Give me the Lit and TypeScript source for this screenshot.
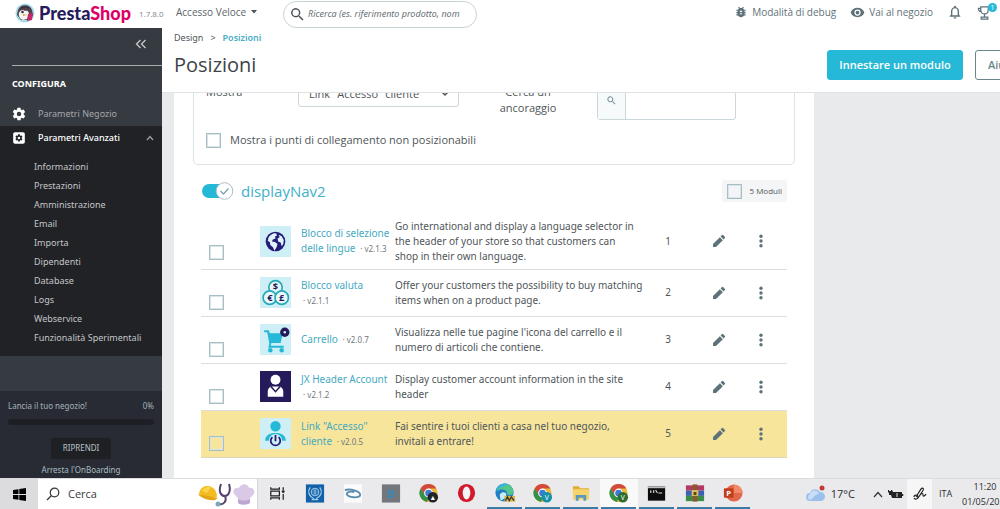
import { LitElement, html, svg, css } from "lit";
import { customElement } from "lit/decorators.js";

interface ModuleRow {
  icon: unknown;
  name: string;
  version: string;
  stacked?: boolean;
  text: string;
  active?: boolean;
}

const globe = svg`<rect width="30" height="30" fill="#cdeff5"/><circle cx="15" cy="15" r="9.500" fill="#251b7a"/>
<path fill="#dff5f9" d="M8 12c1-3 4-5 7.500-5l1 2-2 1.500.500 1.500-2.500 1-1 2 3 .5 2.500 2-1 3-2 3.500-1.500-3.500-2.500-2-.500-3-2-1zM18 8.500l3 1.500 2 3.500-.500 4-1.500 2-1-3.500-2.500-1-.500-3 2-1z"/>`;
const coin = (x: number, y: number, s: string) => svg`<circle cx="${x}" cy="${y}" r="6.500" fill="#e9f8fb" stroke="#25a9b9" stroke-width="1.600"/>
<text x="${x}" y="${y + 3}" text-anchor="middle" font-size="9" font-weight="700" fill="#251b5b">${s}</text>`;
const coins = svg`<rect width="30" height="30" fill="#cdeff5"/>${coin(15, 10, "$")}${coin(9.5, 20, "€")}${coin(21, 20, "£")}`;
const cart = svg`<rect width="30" height="30" rx="1" fill="#cdeff5"/>
<path fill="#25b9d7" d="M4 6h4.500l1 3H22l-2 9.500H11l-.5 2.500H23v2H8l1-4L7 8H4z"/><circle cx="10" cy="25.500" r="2.200" fill="#25b9d7"/><circle cx="21" cy="25.500" r="2.200" fill="#25b9d7"/>
<circle cx="24" cy="8" r="4.500" fill="#251b5b"/><circle cx="24" cy="8" r="1.200" fill="#cdeff5"/>`;
const person = svg`<rect width="30" height="30" fill="#251b5b"/><circle cx="15" cy="8.500" r="4.800" fill="#fff"/>
<path fill="#fff" d="M7.500 25v-5c0-3 2-5 4.500-5h6c2.500 0 4.500 2 4.500 5v5z"/><path d="M10.500 15l4.500 5 4.500-5" fill="none" stroke="#251b5b" stroke-width="1.500"/>`;
const login = svg`<rect width="30" height="30" fill="#cdeff5"/><circle cx="15" cy="8" r="5" fill="#25b9d7"/>
<path fill="#25b9d7" d="M5 22c0-5 4-7.500 10-7.500S25 17 25 22h-3.500a6.500 6.500 0 0 0-13 0z"/>
<path d="M12 18.500a4.600 4.600 0 1 0 6 0M15 16.500v6" fill="none" stroke="#251b7a" stroke-width="1.700"/>`;

const modules: ModuleRow[] = [
  { icon: globe, name: "Blocco di selezione\ndelle lingue", version: "v2.1.3", text: "Go international and display a language selector in\nthe header of your store so that customers can\nshop in their own language." },
  { icon: coins, name: "Blocco valuta", version: "v2.1.1", stacked: true, text: "Offer your customers the possibility to buy matching\nitems when on a product page." },
  { icon: cart, name: "Carrello", version: "v2.0.7", text: "Visualizza nelle tue pagine l'icona del carrello e il\nnumero di articoli che contiene." },
  { icon: person, name: "JX Header Account", version: "v2.1.2", stacked: true, text: "Display customer account information in the site\nheader" },
  { icon: login, name: "Link \"Accesso\"\ncliente", version: "v2.0.5", text: "Fai sentire i tuoi clienti a casa nel tuo negozio,\ninvitali a entrare!", active: true },
];

const subItems = ["Informazioni", "Prestazioni", "Amministrazione", "Email", "Importa", "Dipendenti", "Database", "Logs", "Webservice", "Funzionalità Sperimentali"];

const gearPath = "M19.400 13c0-.3.1-.6.1-1s0-.7-.1-1l2.100-1.600c.2-.2.2-.4.1-.6l-2-3.500c-.1-.2-.4-.3-.6-.2l-2.500 1c-.5-.4-1.100-.7-1.700-1L14.400 2.400c0-.2-.2-.4-.5-.4h-4c-.2 0-.5.2-.5.4L9.100 5.100c-.6.2-1.200.6-1.700 1l-2.500-1c-.2-.1-.5 0-.6.2l-2 3.500c-.1.2-.1.500.1.600L4.500 11c0 .3-.1.600-.1 1s0 .7.1 1l-2.100 1.600c-.2.200-.2.400-.1.600l2 3.500c.1.200.4.300.6.200l2.500-1c.5.400 1.100.7 1.700 1l.4 2.700c0 .2.200.4.500.4h4c.2 0 .5-.2.5-.4l.4-2.700c.6-.2 1.200-.6 1.700-1l2.500 1c.2.100.5 0 .6-.2l2-3.500c.1-.2.1-.5-.1-.6zM12 15.500a3.500 3.500 0 1 1 0-7 3.500 3.500 0 0 1 0 7z";

const searchIcon = svg`<path fill="currentColor" d="M15.500 14h-.8l-.3-.3A6.500 6.500 0 1 0 13.700 14.400l.3.3v.8l5 5 1.500-1.500zm-6 0a4.500 4.500 0 1 1 0-9 4.500 4.500 0 0 1 0 9z"/>`;

const chrome = (badge: string, letter: string) => svg`<circle cx="11" cy="11" r="9.500" fill="#e8b93a"/>
<path fill="#d34a3c" d="M2.800 6.200a9.500 9.500 0 0 1 16.400 0H11L7 13z"/><path fill="#34914c" d="M2.800 6.200L8 14.500l3 1.500-1.500 4.400A9.500 9.500 0 0 1 2.800 6.200z"/>
<circle cx="11" cy="11" r="4.600" fill="#fff"/><circle cx="11" cy="11" r="3.500" fill="#3c7bd8"/>
<circle cx="15.500" cy="15.500" r="5.500" fill="${badge}"/><text x="15.500" y="18" text-anchor="middle" font-size="7" fill="#fff">${letter}</text>`;

const apps: { label: string; art: unknown; state?: string }[] = [
  { label: "Visualizzazione attività", art: svg`<path d="M5 5v2h9V5M5 18v-2h9v2M5 9h9v5H5zM18 5v3M18 12v6" fill="none" stroke="#222" stroke-width="1.300"/><circle cx="18" cy="9.500" r="1.500" fill="#222"/>` },
  { label: "Organizzazione", art: svg`<rect x="2" y="2" width="19" height="19" fill="#1261a8"/><circle cx="11.500" cy="10" r="4" fill="none" stroke="#9fcbe8"/><path d="M7.500 10h8M11.500 6v8M9 7c1 2 4 2 5 0M9 13c1-2 4-2 5 0" fill="none" stroke="#9fcbe8" stroke-width=".7"/><path d="M6.500 5c-3 4-2 9 4 12M16.500 5c3 4 2 9-4 12M8 18h7" fill="none" stroke="#9fcbe8" stroke-width="1.300"/>` },
  { label: "Orbita", art: svg`<rect x="2" y="2" width="19" height="19" fill="#fbfbfb"/><path d="M3 8c5-2 16 1 16 5s-13 3-14-1c0-2 4-3 8-2" fill="none" stroke="#5c8db0" stroke-width="2"/>` },
  { label: "Desktop", art: svg`<rect x="2" y="2" width="19" height="19" fill="#73777b"/><path d="M9 7v8h4l2-3-4-2 3-2" fill="none" stroke="#3b87b5" stroke-width="1.800"/>` },
  { label: "Chrome", art: chrome("#20242a", "▲") },
  { label: "Opera", art: svg`<ellipse cx="11" cy="11" rx="9" ry="9.500" fill="#d1192c"/><ellipse cx="11" cy="11" rx="4" ry="6.800" fill="#f4f4f5"/>` },
  { label: "Edge", state: "open", art: svg`<circle cx="11" cy="10.500" r="9.500" fill="#1f7fc7"/><path fill="#53c58d" d="M11 1a9.500 9.500 0 0 1 9.500 9c0 3-5 4-7 2 1-5-6-6-11-3A9.500 9.500 0 0 1 11 1z"/><path fill="#34b6dc" d="M2 9a9.500 9.500 0 0 1 9-8c2 0 3 .5 4 1-5 1-9 3-13 7z"/><path fill="#c9ebf5" d="M6 14c0-4 5-5 7-2l-1 4-5 3z"/><rect x="11" y="14" width="11" height="6" fill="#d9b43f"/><path d="M12 19l2-4 2 4 2-4 3 4" fill="none" stroke="#333" stroke-width="1.300"/>` },
  { label: "Chrome V", state: "open", art: chrome("#1590a8", "V") },
  { label: "Esplora file", state: "open", art: svg`<path fill="#e2ac38" d="M3 4h6l2 2h9v4H3z"/><path fill="#f7d36b" d="M3 7h17v11H3z"/><path fill="#5a98be" d="M6 19v-6h11v6h-3v-3H9v3z"/>` },
  { label: "Chrome attivo", state: "open current", art: chrome("#2c6e2f", "V") },
  { label: "Terminale", state: "open", art: svg`<rect x="2" y="4" width="18" height="15" fill="#0c0c0c"/><rect x="2" y="4" width="18" height="2" fill="#bdbdbd"/><path d="M5 8v3M8 8v3M10 8l2 3M13 11h4" stroke="#ddd" stroke-width="1.200"/>` },
  { label: "WinRAR", state: "open", art: svg`<rect x="2" y="3" width="19" height="5.500" fill="#b33a66"/><rect x="2" y="8.500" width="19" height="5.500" fill="#3a62b0"/><rect x="2" y="14" width="19" height="5.500" fill="#3c8b48"/><rect x="9" y="2" width="5" height="18" fill="#8a5a2c"/><rect x="8" y="8" width="7" height="6" fill="#e0c060"/><rect x="10" y="10" width="3" height="3" fill="#55401f"/>` },
  { label: "PowerPoint", state: "open", art: svg`<circle cx="12.500" cy="11" r="9" fill="#e0684a"/><path fill="#f08a68" d="M12.500 2a9 9 0 0 1 9 9h-9z"/><rect x="2" y="6" width="10" height="10" rx="1" fill="#c43e1c"/><text x="7" y="14" text-anchor="middle" font-size="8" font-weight="700" fill="#fff">P</text>` },
];

@customElement("app-root")
export class AppRoot extends LitElement {
  static styles = css`
    :host { display: flex; flex-direction: column; height: 100vh; overflow: hidden; background: #fff; color: #4f5659;
      font-family: "Open Sans", "Noto Sans", sans-serif; font-size: 11px; line-height: 16px; }
    * { box-sizing: border-box; }
    a { text-decoration: none; color: inherit; }
    button { font: inherit; color: inherit; background: none; border: 0; padding: 0; }
    h1, h2, p, ul { margin: 0; padding: 0; font-weight: 400; }
    ul { list-style: none; }
    svg { display: block; flex: none; }
    input, select { font: inherit; color: inherit; margin: 0; }

    .topbar { display: flex; align-items: center; height: 28px; flex: none; padding-left: 15px; font-size: 10px; }
    .brand { display: flex; align-items: center; gap: 4px; width: 124px; font-family: Lato, sans-serif; font-size: 18px; line-height: 24px; font-weight: 900; color: #251b5b; padding-bottom: 2px; }
    .brand .pink { color: #df0067; }
    .version { font-size: 8px; color: #7f8488; width: 37px; }
    .quick { display: flex; align-items: center; gap: 5px; width: 107px; padding-bottom: 4px; color: #5a666b; }
    .search { display: flex; align-items: center; gap: 2px; width: 194px; height: 27px; border: 1px solid #c8d2d5; border-radius: 14px; padding: 0 12px 0 5px; color: #4a5154; }
    .search input { flex: 1; min-width: 0; border: 0; outline: 0; background: none; padding: 0; font-family: "Noto Sans", sans-serif; font-size: 9px; font-style: italic; }
    .search input::placeholder { color: #687175; opacity: 1; }
    .links { display: flex; align-items: center; margin-left: auto; margin-right: 8px; gap: 14px; color: #5f7178; padding-bottom: 4px; }
    .links a { display: flex; align-items: center; gap: 4px; }
    .iconbtn { display: grid; }
    .alert { position: relative; }
    .badge { position: absolute; top: -2px; right: -5px; width: 9px; height: 9px; border-radius: 5px; background: #25b9d7; color: #fff; font-size: 7px; line-height: 9px; text-align: center; }

    .body { flex: 1; min-height: 0; display: flex; }
    .side { width: 162px; flex: none; display: flex; flex-direction: column; background: #363a41; color: #c4c5c7; font-family: "Noto Sans", sans-serif; font-size: 9px; }
    .fold { display: flex; justify-content: flex-end; padding: 10px 15px 0 0; height: 38px; margin-left: 12px; border-bottom: 1px solid #a9acb0; color: #c9cbcd; }
    .section { padding: 10px 12px; font-weight: 700; color: #fff; line-height: 16px; }
    .item { display: flex; align-items: center; height: 24px; padding: 0 8px 0 12px; gap: 12px; color: #a5a8ac; }
    .item svg { color: #fff; }
    .item.open { color: #fff; font-weight: 500; }
    .item .caret { margin-left: auto; }
    .group { background: #202226; padding-bottom: 9px; }
    .subs { padding: 7px 0 0 34px; }
    .subs li { line-height: 19px; white-space: nowrap; }
    .onboard { margin-top: auto; height: 87px; background: #282b33; padding: 7px 8px 0; display: flex; flex-direction: column; align-items: center; font-size: 8px; }
    .launch { display: flex; justify-content: space-between; width: 100%; color: #a4b3b8; }
    .bar { width: 100%; height: 6px; border-radius: 3px; background: #1d1f24; margin: 5px 0 13px; }
    .resume { width: 60px; height: 22px; background: #1e2024; border-radius: 2px; color: #b8c3c7; }
    .stop { color: #a9bcc2; margin-top: 3px; }

    .main { flex: 1; min-width: 0; display: flex; flex-direction: column; }
    .head { height: 65px; flex: none; display: flex; overflow: hidden; padding-left: 12px; border-bottom: 1px solid #dfe3e5; }
    .crumbs { display: flex; gap: 7px; padding-top: 2px; font-family: "Noto Sans", sans-serif; font-size: 9px; }
    .crumbs a:last-child { color: #4aaec4; font-weight: 600; }
    h1 { font-size: 20px; line-height: 28px; color: #3e4347; margin-top: 5px; }
    .actions { display: flex; gap: 12px; margin: 22px -27px 0 auto; }
    .btn { width: 52px; height: 30px; border-radius: 3px; border: 1px solid #6c868e; padding: 0 0 0 12px; color: #6c868e; text-align: left; font-weight: 600; white-space: nowrap; }
    .btn.primary { background: #25b9d7; border-color: #25b9d7; color: #fff; width: 136px; padding: 0; text-align: center; }

    .scroll { flex: 1; min-height: 0; overflow: hidden; background: #e8eaeb; padding: 0 186px 0 12px; }
    .card { background: #fff; height: 100%; padding: 0 19px; }
    .filters { border: 1px solid #dde4e6; border-top: 0; border-radius: 0 0 5px 5px; padding: 0 12px 16px; height: 72px; display: flex; flex-direction: column; justify-content: flex-end; }
    .fields { display: flex; align-items: flex-start; margin-bottom: 12px; }
    .fields label { padding-top: 4px; }
    .l1 { width: 92px; }
    .l2 { width: 138px; text-align: center; }
    .l2 span { display: block; }
    .pick { display: grid; align-items: center; width: 161px; }
    .pick select { grid-area: 1 / 1; appearance: none; width: 100%; height: 27px; border: 1px solid #cbd7db; border-radius: 3px; background: #fff; padding: 0 12px 0 10px; }
    .pick svg { grid-area: 1 / 1; justify-self: end; margin-right: 10px; pointer-events: none; }
    .combo { display: flex; width: 139px; height: 40px; border: 1px solid #cbd7db; border-radius: 3px; }
    .combo span { width: 28px; display: grid; place-items: center; border-right: 1px solid #cbd7db; background: #f7fafb; color: #6c868e; }
    .combo input { flex: 1; min-width: 0; border: 0; background: none; }
    .box { appearance: none; width: 15px; height: 15px; border: 1px solid #a9bdc5; box-shadow: inset 0 0 0 1px #d9e4e8; background: none; flex: none; display: block; }
    .check { display: flex; align-items: center; gap: 9px; }

    .hook { display: flex; align-items: center; padding: 0 8px; height: 22px; margin: 15px 0 12px; }
    .toggle { display: grid; margin-right: 7px; }
    .toggle > * { grid-area: 1 / 1; margin: 0; }
    .toggle input { opacity: 0; width: 33px; height: 18px; }
    h2 { font-size: 15px; line-height: 22px; color: #3fb0c8; }
    .count { margin-left: auto; display: flex; align-items: center; gap: 8px; height: 22px; padding: 0 5px; background: #f4f5f6; border-radius: 3px; font-size: 8px; }
    .tablewrap { padding: 0 8px; }
    table { width: 100%; table-layout: fixed; border-collapse: collapse; font-family: "Noto Sans", sans-serif; font-size: 10px; }
    td { height: 47px; padding: 0; border-bottom: 1px solid #dadedf; vertical-align: middle; line-height: 15px; white-space: pre; }
    tr:first-child td { height: 55px; }
    tr.active td { background: #f7e59c; border-color: #ddd8b8; }
    .c1 { width: 59px; } .c2 { width: 41px; } .c3 { width: 94px; } .c5 { width: 46px; } .c6 { width: 56px; } .c7 { width: 40px; }
    td.sel { vertical-align: bottom; padding: 0 0 6px 8px; }
    tr:first-child td.sel { padding-bottom: 9px; }
    td.mid { text-align: center; }
    td.mid:last-child { padding-right: 13px; }
    td.mid button { display: block; margin: 0 auto; color: #5d7279; }
    .name { color: #45aabf; }
    .ver { font-size: 8px; color: #70777b; }

    .taskbar { display: flex; height: 31px; flex: none; background: #eaeaec; overflow: hidden; color: #2c2c2c; font-size: 11px; border-top: 1px solid #dcdcde; }
    .start { width: 38px; background: #dcdcdf; display: grid; place-items: center; }
    .find { width: 220px; background: #fff; display: flex; align-items: center; gap: 8px; padding: 0 2px 0 8px; border-right: 1px solid #d5d5d8; }
    .find input { flex: 1; min-width: 0; width: 60px; border: 0; padding: 0; background: none; }
    .find input::placeholder { color: #3a3a3a; opacity: 1; }
    .app { width: 38px; display: grid; place-items: center; border-bottom: 2px solid transparent; padding: 0 3px; }
    .app.open { border-image: linear-gradient(90deg, transparent 3px, #3a7ca5 3px, #3a7ca5 34px, transparent 34px) 2; }
    .app.current { background: #f9f9fa; }
    .tray { margin-left: auto; margin-right: -8px; display: flex; align-items: center; height: 100%; white-space: nowrap; }
    .weather { display: flex; align-items: center; gap: 5px; margin-right: 18px; }
    .pen { height: 100%; width: 25px; display: grid; place-items: center; background: #f6f6f7; margin: 0 7px 0 2px; }
    .lang { font-size: 9px; width: 23px; }
    .clock { font-size: 9px; line-height: 15px; text-align: center; width: 46px; }
  `;

  private box(id: string, label: string) {
    return html`<input class="box" type="checkbox" id=${id} aria-label=${label} />`;
  }

  private renderRow(m: ModuleRow, i: number) {
    return html`<tr class=${m.active ? "active" : ""}>
      <td class="sel">${this.box(`m${i}`, m.name)}</td>
      <td><svg width="31" height="31" viewBox="0 0 30 30">${m.icon}</svg></td>
      <td><a href="#" class="name">${m.name}</a>${m.stacked ? html`<br />` : " "}<span class="ver"> · ${m.version}</span></td>
      <td>${m.text}</td>
      <td class="mid">${i + 1}</td>
      <td class="mid"><button aria-label="Modifica"><svg width="16" height="16" viewBox="0 0 24 24"><path fill="currentColor" d="M3 16.500V21h4.500L17.800 10.700l-4.500-4.500zM20.900 7.600a1.200 1.200 0 0 0 0-1.700l-2.800-2.800a1.200 1.200 0 0 0-1.700 0l-2 2 4.500 4.500z"/></svg></button></td>
      <td class="mid"><button aria-label="Altro"><svg width="16" height="16" viewBox="0 0 16 16"><g fill="currentColor"><circle cx="8" cy="3.300" r="1.700"/><circle cx="8" cy="8" r="1.700"/><circle cx="8" cy="12.700" r="1.700"/></g></svg></button></td>
    </tr>`;
  }

  render() {
    return html`
      <header class="topbar">
        <a href="#" class="brand">
          <svg width="20" height="20" viewBox="0 0 20 20"><circle cx="10" cy="10" r="9.500" fill="#a4dbe8"/><path fill="#54434d" d="M3 7a7.500 7.500 0 0 1 14 0l1 5-3 5H6L2 12z"/><path fill="#f5f5f5" d="M4 10c1-3 4-4 6-2 3-1 4 1 4 4l-2 4-4 1c-3-1-5-4-4-7z"/><circle cx="7.500" cy="9" r="1.300" fill="#333"/><path fill="#d9a441" d="M8 11l4 1-4 1z"/><path fill="#c6286b" d="M13 11l5-1-1 7-5 1z"/><path fill="#3b3340" d="M4 6c3-4 9-4 12 0l-6-1.500z"/></svg>
          <span>Presta<span class="pink">Shop</span></span>
        </a>
        <span class="version">1.7.8.0</span>
        <button class="quick">Accesso Veloce <svg width="6" height="4" viewBox="0 0 6 4"><path fill="#4b5357" d="M0 0h6L3 3.500z"/></svg></button>
        <label class="search"><svg width="17" height="17" viewBox="0 0 24 24">${searchIcon}</svg><input type="text" aria-label="Ricerca" placeholder="Ricerca (es. riferimento prodotto, nom" /></label>
        <nav class="links">
          <a href="#"><svg width="14" height="14" viewBox="0 0 24 24"><path fill="currentColor" d="M20 8h-2.800a6 6 0 0 0-1.800-2L17 4.400 15.600 3l-2.200 2.200a6 6 0 0 0-2.800 0L8.400 3 7 4.400 8.600 6a6 6 0 0 0-1.800 2H4v2h2.100l-.1 1v1H4v2h2v1l.1 1H4v2h2.800a6 6 0 0 0 10.400 0H20v-2h-2.100l.1-1v-1h2v-2h-2v-1l-.1-1H20zm-6 8h-4v-2h4zm0-4h-4v-2h4z"/></svg>Modalità di debug</a>
          <a href="#"><svg width="15" height="15" viewBox="0 0 24 24"><path fill="currentColor" d="M12 4.500C7 4.500 2.700 7.600 1 12c1.700 4.400 6 7.500 11 7.500s9.300-3.100 11-7.500c-1.700-4.400-6-7.500-11-7.500zM12 17a5 5 0 1 1 0-10 5 5 0 0 1 0 10zm0-8a3 3 0 1 0 0 6 3 3 0 0 0 0-6z"/></svg>Vai al negozio</a>
          <button class="iconbtn" aria-label="Notifiche"><svg width="16" height="16" viewBox="0 0 24 24"><path fill="currentColor" d="M12 22a2 2 0 0 0 2-2h-4c0 1.100.9 2 2 2zm6-6v-5c0-3.100-1.600-5.600-4.500-6.300V4a1.500 1.500 0 0 0-3 0v.7C7.600 5.400 6 7.900 6 11v5l-2 2v1h16v-1zm-2 1H8v-6c0-2.500 1.500-4.500 4-4.500s4 2 4 4.500z"/></svg></button>
          <button class="iconbtn alert" aria-label="Obiettivi"><svg width="15" height="15" viewBox="0 0 16 16"><path fill="none" stroke="currentColor" stroke-width="1.300" d="M4 2h8v3c0 3-2 4.500-4 4.500S4 8 4 5zM4 3.500H1.500C1.500 6 3 7 4.500 7M8 9.500V13M4.500 15v-2h7v2z"/></svg><span class="badge">1</span></button>
        </nav>
      </header>
      <div class="body">
        <aside class="side">
          <button class="fold" aria-label="Riduci"><svg width="12" height="12" viewBox="0 0 12 12"><path d="M5.500 2l-4 4 4 4M10.500 2l-4 4 4 4" fill="none" stroke="currentColor" stroke-width="1.300"/></svg></button>
          <div class="section">CONFIGURA</div>
          <a href="#" class="item"><svg width="14" height="14" viewBox="1 1 22 22"><path fill="currentColor" d=${gearPath}/></svg>Parametri Negozio</a>
          <div class="group">
            <a href="#" class="item open"><svg width="14" height="14" viewBox="0 0 24 24"><rect x="2" y="2" width="20" height="20" rx="3" fill="currentColor"/><g transform="translate(4.500 4.500) scale(.62)"><path fill="#202226" d=${gearPath}/></g></svg>Parametri Avanzati<svg class="caret" width="8" height="6" viewBox="0 0 8 6"><path d="M1 5l3-3.500L7 5" fill="none" stroke="#9ea1a6" stroke-width="1.200"/></svg></a>
            <ul class="subs">${subItems.map((s) => html`<li><a href="#">${s}</a></li>`)}</ul>
          </div>
          <div class="onboard">
            <div class="launch"><span>Lancia il tuo negozio!</span><span>0%</span></div>
            <div class="bar"></div>
            <button class="resume">RIPRENDI</button>
            <a href="#" class="stop">Arresta l'OnBoarding</a>
          </div>
        </aside>
        <main class="main">
          <div class="head">
            <div>
              <nav class="crumbs"><a href="#">Design</a><span>&gt;</span><a href="#">Posizioni</a></nav>
              <h1>Posizioni</h1>
            </div>
            <div class="actions"><button class="btn primary">Innestare un modulo</button><button class="btn">Aiuto</button></div>
          </div>
          <div class="scroll">
            <div class="card">
              <div class="filters">
                <div class="fields">
                  <label class="l1" for="show">Mostra</label>
                  <div class="pick"><select id="show"><option>Link "Accesso" cliente</option></select><svg width="8" height="6" viewBox="0 0 8 6"><path d="M1 1l3 3 3-3" fill="none" stroke="#4f5659" stroke-width="1.500"/></svg></div>
                  <label class="l2" for="anchor"><span>Cerca un</span><span>ancoraggio</span></label>
                  <div class="combo"><span><svg width="11" height="11" viewBox="0 0 24 24">${searchIcon}</svg></span><input id="anchor" type="text" /></div>
                </div>
                <div class="check">${this.box("np", "Mostra i punti di collegamento non posizionabili")}<label for="np">Mostra i punti di collegamento non posizionabili</label></div>
              </div>
              <div class="hook">
                <label class="toggle"><input type="checkbox" checked aria-label="displayNav2" /><svg width="33" height="18" viewBox="0 0 33 18"><rect x="1" y="2" width="28" height="14" rx="7" fill="#25b9d7"/><circle cx="23.500" cy="9" r="8.300" fill="#fff" stroke="#a9c0c8"/><path d="M19.500 9l3 3 5-5.500" fill="none" stroke="#7fa3ae" stroke-width="1.300"/></svg></label>
                <h2>displayNav2</h2>
                <label class="count">${this.box("all", "5 Moduli")}5 Moduli</label>
              </div>
              <div class="tablewrap">
                <table>
                  <colgroup><col class="c1" /><col class="c2" /><col class="c3" /><col /><col class="c5" /><col class="c6" /><col class="c7" /></colgroup>
                  <tbody>${modules.map((m, i) => this.renderRow(m, i))}</tbody>
                </table>
              </div>
            </div>
          </div>
        </main>
      </div>
      <footer class="taskbar">
        <button class="start" aria-label="Start"><svg width="13" height="13" viewBox="0 0 13 13"><path fill="#000" d="M0 2l5.500-.8V6H0zM6.300 1L13 0v6H6.300zM0 7h5.500v4.800L0 11zM6.300 7H13v6l-6.700-1z"/></svg></button>
        <label class="find"><svg width="14" height="14" viewBox="0 0 14 14"><path d="M1 13l4.500-4.500" stroke="#333" stroke-width="1.200"/><circle cx="8.500" cy="5.500" r="4.300" fill="none" stroke="#333" stroke-width="1.200"/></svg><input type="text" aria-label="Cerca" placeholder="Cerca" />
          <svg width="58" height="28" viewBox="0 0 58 28"><path fill="#f3bd22" d="M2 14C3 6 11 4 16 8c3 2 4 6 4 9l-6 1z"/><path fill="#f8d64b" d="M5 11c2-4 7-5 9-4l-4 6z"/><path fill="#e3a516" d="M1 14l20 4-3 2C12 21 4 18 1 14z"/><path d="M24 4c-3 8 0 12 4 12s6-6 4-12M28 16c2 5-1 9-6 8" fill="none" stroke="#57406f" stroke-width="2"/><circle cx="21" cy="24" r="2.500" fill="#7ea5bd"/><path fill="#d9c8e6" d="M38 15c-4-4 0-8 4-7 2-5 9-5 10 0 5-1 7 4 4 7l-3 3v5c-4 2-9 2-12 0v-5z"/><path fill="#bda7d2" d="M41 19c4 2 9 2 12 0v4c-4 2-9 2-12 0z"/></svg>
        </label>
        ${apps.map((a) => html`<button class="app ${a.state ?? ""}" aria-label=${a.label}><svg width="22" height="22" viewBox="0 0 23 22">${a.art}</svg></button>`)}
        <div class="tray">
          <span class="weather"><svg width="20" height="18" viewBox="0 0 20 18"><path fill="#9cc0ec" d="M4 16a4 4 0 0 1 0-8 5.500 5.500 0 0 1 10-1 4.500 4.500 0 0 1 1 9z"/><path fill="#c9def6" d="M4 15c-2-1-3-4 0-6 1-4 7-5 9 0-4 0-4 3-9 6z"/><circle cx="16" cy="3" r="2.500" fill="#c23a3a"/></svg>17°C</span>
          <svg width="10" height="7" viewBox="0 0 10 7"><path d="M1 6l4-4.500L9 6" fill="none" stroke="#333" stroke-width="1.200"/></svg>
          <svg width="22" height="12" viewBox="0 0 22 12"><path fill="#222" d="M10 4h9v6H9l-1-3H6V5L5 4V2h1v1h2V2h1z"/><path d="M19.500 6v2" stroke="#222" stroke-width="1.500"/><path d="M14 5v4" stroke="#ddd"/></svg>
          <span class="pen"><svg width="14" height="14" viewBox="0 0 14 14"><path d="M3 10l5-8c2-2 3 0 2 1.500L5 11M1 10c0-3 4-2 4 0s-3 3-4 1M7 8c2-2 3-2 3 0s2 1 3-1" fill="none" stroke="#222" stroke-width="1.200"/></svg></span>
          <span class="lang">ITA</span>
          <span class="clock">11:20<br />01/05/2023</span>
        </div>
      </footer>`;
  }
}
